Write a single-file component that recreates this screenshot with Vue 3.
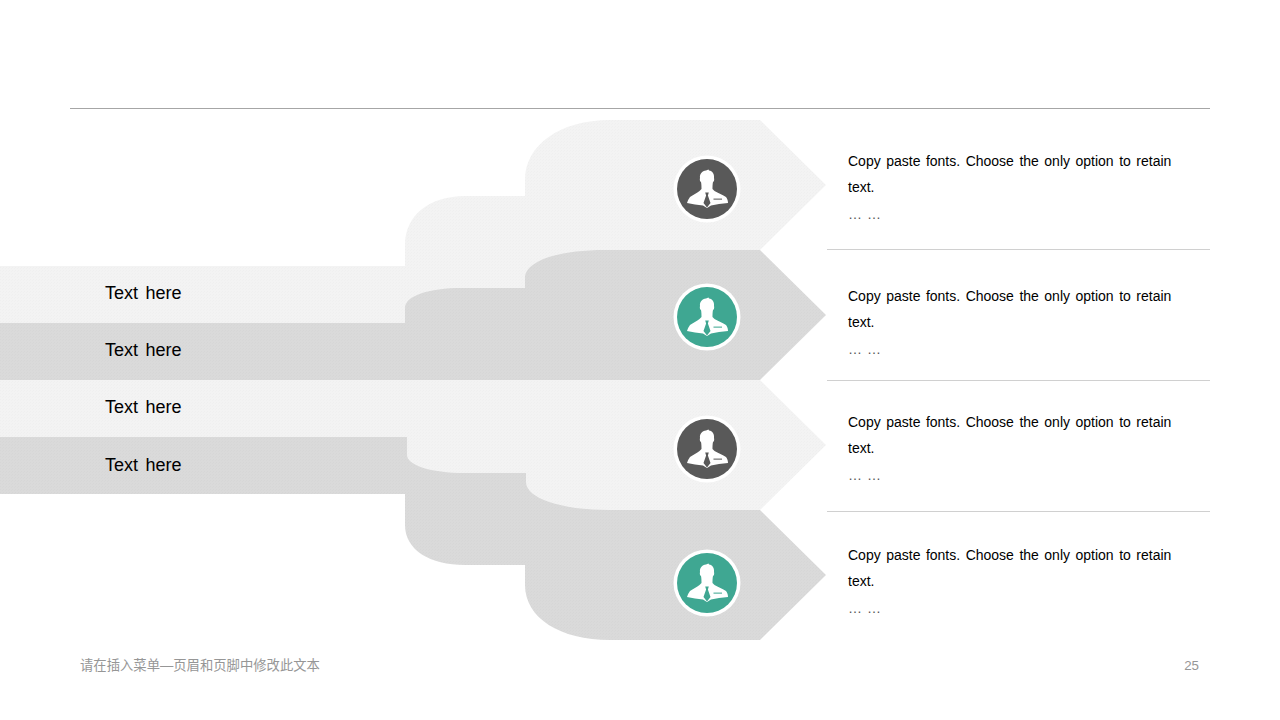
<script setup>
const labels = ['Text here', 'Text here', 'Text here', 'Text here']
const notes = [1, 2, 3, 4]
const shapes = [
  { fill: 'url(#weave-light)', d: 'M0 266H405V245C405 215 430 196 465 196H525V180C525 145 560 120 610 120H760L826 185L760 250V323H0Z' },
  { fill: 'url(#weave-dark)', d: 'M0 323H405V308C405 296 428 288 462 288H525V278C525 262 555 250 605 250H760L826 315L760 380H0Z' },
  { fill: 'url(#weave-dark)', d: 'M0 494H405V525C405 550 430 565 465 565H525V585C525 618 560 640 610 640H760L826 575L760 510V437H0Z' },
  { fill: 'url(#weave-light)', d: 'M0 380H760L826 445L760 510H610C560 510 526 498 526 482V473H465C430 473 407 465 407 455V437H0Z' },
]
const badges = [
  { y: 189, fill: '#595959' },
  { y: 317, fill: '#3fa792' },
  { y: 449, fill: '#595959' },
  { y: 583, fill: '#3fa792' },
]
</script>

<template>
  <div class="page">
    <svg class="art" width="1280" height="720" viewBox="0 0 1280 720">
      <defs>
        <pattern id="weave-light" width="3" height="3" patternUnits="userSpaceOnUse">
          <rect width="3" height="3" fill="#f3f3f3" />
          <rect width="1" height="1" fill="#efefef" />
          <rect x="2" y="1" width="1" height="1" fill="#f0f0f0" />
        </pattern>
        <pattern id="weave-dark" width="3" height="3" patternUnits="userSpaceOnUse">
          <rect width="3" height="3" fill="#dadada" />
          <rect width="1" height="1" fill="#d6d6d6" />
          <rect x="2" y="1" width="1" height="1" fill="#d7d7d7" />
        </pattern>
      </defs>
      <path v-for="(s, i) in shapes" :key="i" :d="s.d" :fill="s.fill" />
      <g v-for="(b, i) in badges" :key="'b' + i" :transform="`translate(707 ${b.y})`">
        <circle r="33.5" fill="#fff" />
        <circle r="30" :fill="b.fill" />
        <path fill="#fff" d="M-7 -11C-7.5 -15 -5 -18 -1 -18.5L1.5 -19.5L2 -18.5C5.5 -18 7.5 -15 7 -11C7.5 -9.5 7 -7.5 6 -7C5.5 -4.5 5.5 -2 5.5 0L7.5 2C11 4 16 6 19 8C20.5 10 21 12 21 14L12 15L4 16.5L0 19L-4 16.5L-12 15.5L-20 14C-19.5 12 -18.5 10 -17 8C-14 6 -10 4 -7.5 2L-5.5 0C-5.5 -2 -5.5 -4.5 -6 -7C-7 -7.5 -7.5 -9.5 -7 -11Z" />
        <path :fill="b.fill" d="M-1.8 3.5H1.8L0.9 6.5L3.5 14L0 18.5L-3.5 14L-0.9 6.5Z" />
        <path :fill="b.fill" opacity="0.8" d="M6.5 9.5H15V10.8H6.5Z" />
      </g>
    </svg>
    <div class="rule"></div>
    <div class="stage">
      <div class="labels">
        <div v-for="(l, i) in labels" :key="i" class="label">{{ l }}</div>
      </div>
      <div class="notes">
        <div v-for="n in notes" :key="n" class="note">
          <div class="copy">Copy paste fonts. Choose the only option to retain text.</div>
          <div class="more">… …</div>
        </div>
      </div>
    </div>
    <div class="footer">
      <span>请在插入菜单—页眉和页脚中修改此文本</span>
      <span>25</span>
    </div>
  </div>
</template>

<style scoped>
.page {
  position: relative;
  width: 1280px;
  height: 720px;
  overflow: hidden;
  background: #fff;
  display: flex;
  flex-direction: column;
  font-family: "Liberation Sans", "Noto Sans CJK SC", sans-serif;
}
.art {
  position: absolute;
  left: 0;
  top: 0;
}
.rule {
  position: relative;
  height: 1px;
  margin: 108px 70px 0;
  background: #a6a6a6;
}
.stage {
  position: relative;
  height: 547px;
  display: flex;
  justify-content: space-between;
  align-items: flex-start;
}
.labels {
  margin-top: 157px;
  padding-left: 105px;
}
.label {
  height: 57px;
  line-height: 55px;
  font-size: 18px;
  word-spacing: 2.5px;
  color: #000;
}
.label:last-child {
  line-height: 57px;
}
.notes {
  width: 383px;
  margin-right: 70px;
}
.note {
  box-sizing: border-box;
  height: 131px;
  border-bottom: 1px solid #d0d0d0;
  padding-left: 21px;
  padding-right: 30px;
}
.note:nth-child(1) {
  height: 141px;
  padding-top: 39px;
}
.note:nth-child(2) {
  padding-top: 33px;
}
.note:nth-child(3) {
  padding-top: 28px;
}
.note:nth-child(4) {
  padding-top: 30px;
  border-bottom: 0;
}
.copy {
  font-size: 14px;
  line-height: 26px;
  word-spacing: 1.6px;
  color: #000;
}
.more {
  font-size: 14px;
  line-height: 28px;
  word-spacing: 1px;
  color: #555;
}
.footer {
  position: relative;
  display: flex;
  justify-content: space-between;
  padding: 0 81px 0 80px;
  font-size: 13.33px;
  line-height: 20px;
  color: #969696;
}
</style>
